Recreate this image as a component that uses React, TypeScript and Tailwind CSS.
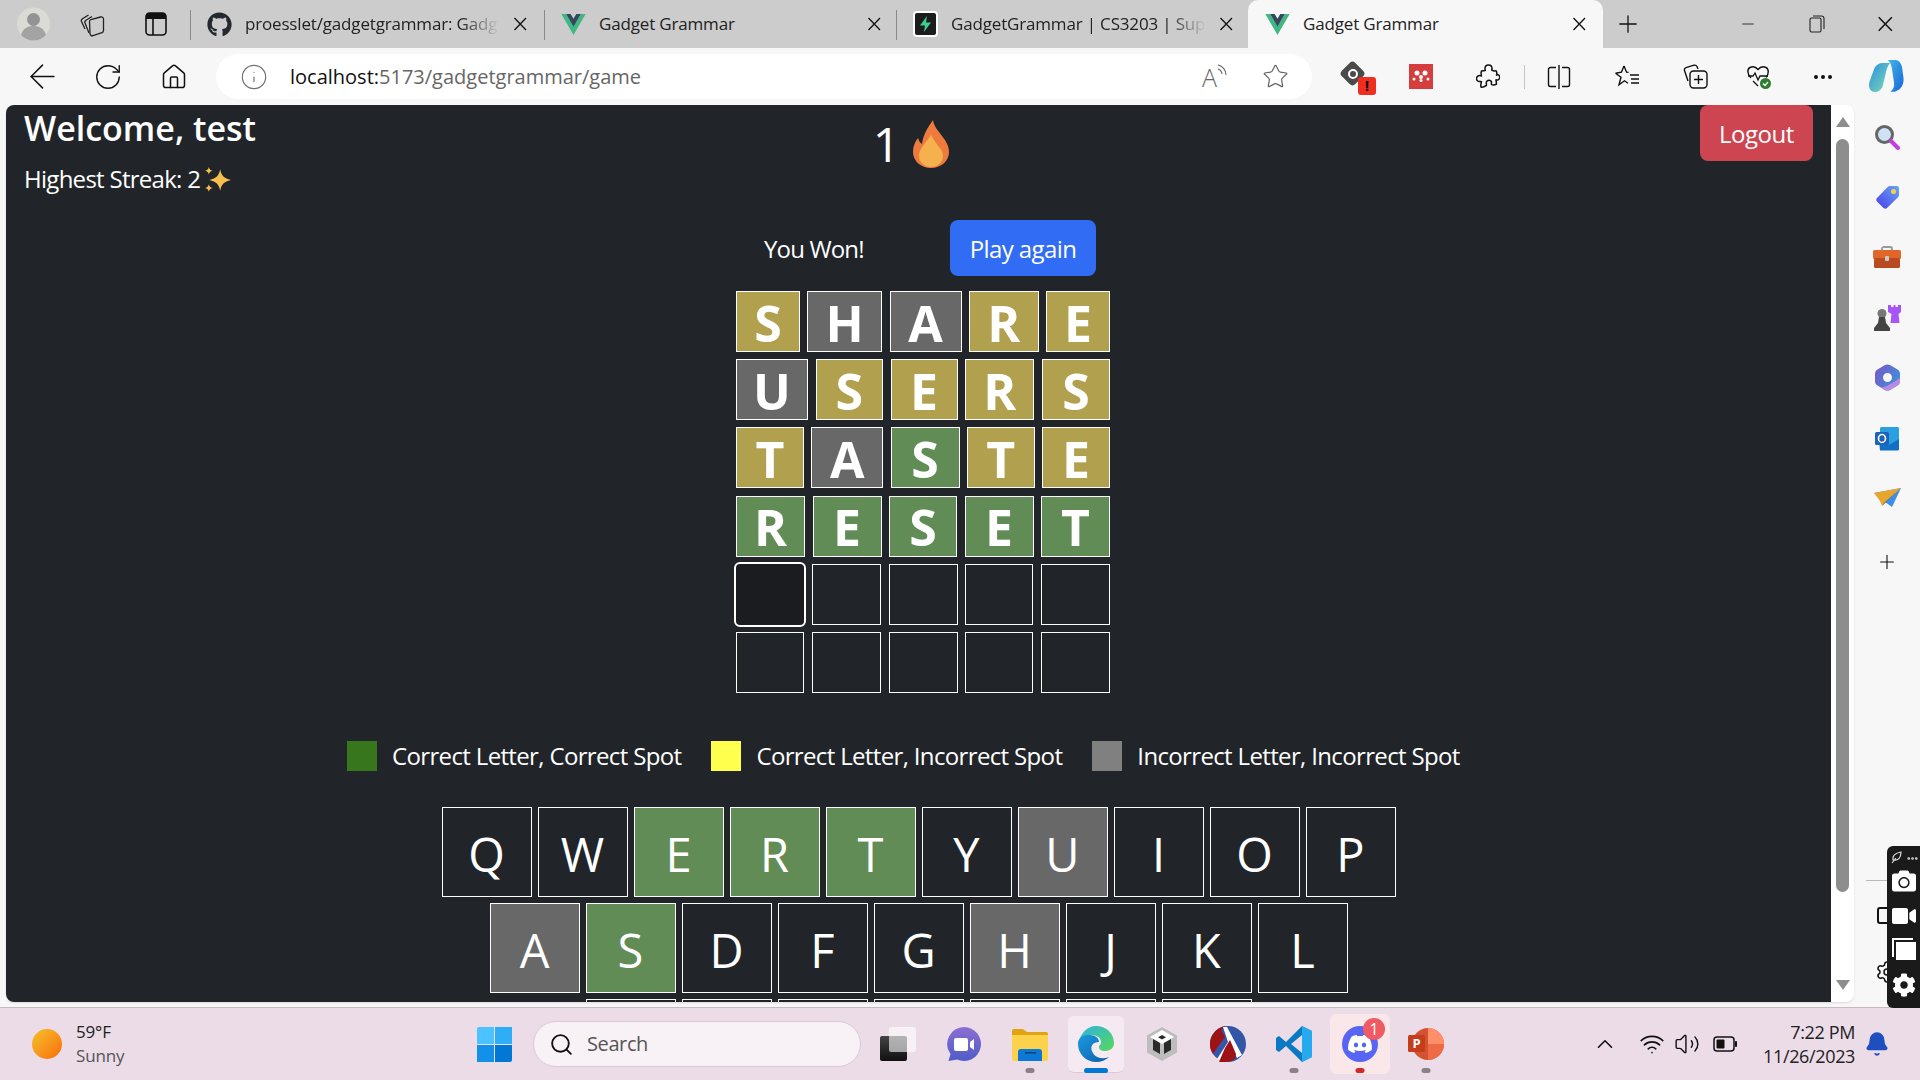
import { ArrowLeft, Ellipsis, House, Info, RotateCw, Search, Star, Plus, Minus, ChevronUp, Wifi, Volume2, Bell, Settings } from "lucide-react";
import { FaCamera, FaCog, FaDiscord, FaGithub, FaVideo } from "react-icons/fa";

const CloseIcon = ({ size = 14 }: { size?: number }) => (
  <svg width={size} height={size} viewBox="0 0 14 14" stroke="#111" strokeWidth="1.3" fill="none" className="shrink-0">
    <path d="M1.5 1 13 13M13 1 1.5 13" />
  </svg>
);

const VueLogo = () => (
  <svg width="25" height="21" viewBox="0 0 256 221" className="shrink-0">
    <path d="M0 0l128 220.8L256 0h-51.2L128 132.48 50.56 0H0z" fill="#41B883" />
    <path d="M50.56 0L128 133.12 204.8 0h-47.36L128 51.2 97.92 0H50.56z" fill="#35495E" />
  </svg>
);

const SupabaseLogo = () => (
  <svg width="25" height="26" viewBox="0 0 25 26" className="shrink-0">
    <rect x="1" y="1" width="23" height="24" rx="3" fill="#1c1c1c" stroke="#fff" strokeWidth="2" />
    <path d="M14 5 7 14.5h5L11 21l7-9.5h-5z" fill="#3ecf8e" />
  </svg>
);

interface ITabProps {
  title: string;
  icon: React.ReactNode;
  width: string;
  titleWidth: string;
  active?: boolean;
  fade?: boolean;
}

const Tab = (props: ITabProps) => {
  if (props.active) {
    return (
      <div className={`${props.width} h-[48px] bg-[#f7f7f7] rounded-t-[10px] flex items-center pl-[17px] text-[#222]`}>
        {props.icon}
        <div className={`${props.titleWidth} ml-[13px] text-[17px] tracking-[-0.01em] whitespace-nowrap overflow-hidden`}>{props.title}</div>
        <CloseIcon />
      </div>
    );
  }
  return (
    <div className={`${props.width} h-[48px] flex items-center pl-[17px] text-[#222] relative`}>
      <div className="absolute left-0 top-[10px] h-[30px] w-[1px] bg-[#8a8a8a]" />
      {props.icon}
      <div className={`${props.titleWidth} ml-[13px] text-[17px] tracking-[-0.01em] whitespace-nowrap overflow-hidden ${props.fade ? "[mask-image:linear-gradient(to_right,black_85%,transparent)]" : ""}`}>{props.title}</div>
      <CloseIcon />
    </div>
  );
};

const TabBar = () => (
  <div className="h-[48px] bg-[#cccccc] flex items-center">
    <div className="w-[67px] flex justify-center">
      <svg width="33" height="34" viewBox="0 0 33 34">
        <circle cx="16.5" cy="17" r="16.5" fill="#dbdbd6" />
        <circle cx="16.5" cy="12.5" r="6.5" fill="#939393" />
        <path d="M4 28c2-7 7-9 12.500-9s10.500 2 12.500 9c-3 3.500-7.500 5.500-12.500 5.500S7 31.500 4 28z" fill="#a3a3a3" />
      </svg>
    </div>
    <div className="w-[50px] flex justify-center">
      <svg width="25" height="25" viewBox="0 0 25 25" fill="none" stroke="#222" strokeWidth="1.3">
        <path d="M5 17 1.500 9.500c-.5-1.200 0-2.200 1-2.700L8.500 3" />
        <path d="M9 21 5 11c-.5-1.200 0-2.200 1-2.700L12 4.500" />
        <path d="M9.500 9.500c0-1 .6-1.700 1.500-2l9.500-2.500c1.500-.4 3 .5 3 2v11.500c0 1-.6 1.800-1.500 2.100l-9 3c-1.500.5-3-.5-3-2z" />
      </svg>
    </div>
    <div className="w-[73px] pl-[28px]">
      <svg width="22" height="24" viewBox="0 0 22 24">
        <rect x="1" y="1" width="20" height="22" rx="3.500" fill="none" stroke="#111" strokeWidth="1.6" />
        <path d="M1 4.500A3.500 3.500 0 0 1 4.500 1h13A3.500 3.500 0 0 1 21 4.500V7H1z" fill="#111" />
        <path d="M8 7v16" stroke="#111" strokeWidth="1.6" />
      </svg>
    </div>
    <Tab title="proesslet/gadgetgrammar: Gadget Grammar" width="w-[354px]" titleWidth="w-[254px] mr-[14px]" fade icon={<FaGithub size={25} color="#24292f" className="shrink-0" />} />
    <Tab title="Gadget Grammar" width="w-[352px]" titleWidth="w-[268px]" icon={<VueLogo />} />
    <Tab title="GadgetGrammar | CS3203 | Supabase" width="w-[352px]" titleWidth="w-[255px] mr-[13px]" fade icon={<SupabaseLogo />} />
    <Tab title="Gadget Grammar" width="w-[355px]" titleWidth="w-[269px]" active icon={<VueLogo />} />
    <div className="ml-[9px] w-[32px] flex justify-center"><Plus size={28} strokeWidth={1.1} color="#111" /></div>
    <div className="ml-[89px] w-[30px] flex justify-center"><Minus size={18} strokeWidth={1.2} color="#222" /></div>
    <div className="ml-[39px] w-[30px] flex justify-center">
      <svg width="16" height="18" viewBox="0 0 16 18" fill="none" stroke="#222" strokeWidth="1.1">
        <rect x="1" y="3" width="11" height="14" rx="1.500" />
        <path d="M4 1h8.500A2.500 2.500 0 0 1 15 3.500V14" />
      </svg>
    </div>
    <div className="ml-[38px] w-[30px] flex justify-center"><CloseIcon size={16} /></div>
  </div>
);

const ToolSlot = ({ width, children }: { width: string; children: React.ReactNode }) => (
  <div className={`${width} h-[57px] flex items-center justify-center shrink-0`}>{children}</div>
);

const ToolBar = () => (
  <div className="h-[57px] bg-[#f7f7f7] flex items-center pl-[9px]">
    <ToolSlot width="w-[66px]"><ArrowLeft size={39} strokeWidth={0.9} color="#111" /></ToolSlot>
    <ToolSlot width="w-[66px]"><RotateCw size={30} strokeWidth={1.1} color="#111" /></ToolSlot>
    <ToolSlot width="w-[66px]"><House size={28} strokeWidth={1.3} color="#111" /></ToolSlot>
    <div className="ml-[9px] w-[1096px] h-[45px] rounded-full bg-white flex items-center shrink-0">
      <div className="ml-[24px]"><Info size={28} strokeWidth={1} color="#707070" /></div>
      <div className="ml-[22px] text-[20px] text-[#666] w-[904px] whitespace-nowrap">
        <span className="text-[#111]">localhost:</span>5173/gadgetgrammar/game
      </div>
      <div className="w-[32px] flex items-end text-[#666] ml-[8px]">
        <span className="text-[25px] leading-none font-light">A</span>
        <svg width="10" height="18" viewBox="0 0 10 18" fill="none" stroke="#666" strokeWidth="1.100" className="mb-[8px]">
          <path d="M1 5a6 6 0 0 1 4 5M1 1a10 10 0 0 1 8 10" />
        </svg>
      </div>
      <div className="ml-[28px]"><Star size={27} strokeWidth={1.1} color="#666" /></div>
    </div>
    <div className="ml-[10px] flex items-center">
      <ToolSlot width="w-[66px]">
        <div className="relative w-[28px] h-[30px]">
          <div className="absolute left-[2px] top-[2px] w-[19px] h-[19px] bg-[#4a4a4a] rounded-[4px] rotate-45" />
          <div className="absolute left-[7px] top-[7px] w-[10px] h-[10px] border-2 border-white rounded-full" />
          <div className="absolute left-[17px] top-[15px] w-[18px] h-[18px] bg-[#ef2e1f] rounded-[3px] text-[14px] font-bold leading-[18px] text-center text-black">!</div>
        </div>
      </ToolSlot>
      <ToolSlot width="w-[66px]">
        <svg width="24" height="25" viewBox="0 0 24 25">
          <rect width="24" height="25" fill="#d63d3d" />
          <g fill="#fff">
            <circle cx="8" cy="9" r="2.500" /><circle cx="16" cy="9" r="2.500" /><circle cx="12" cy="13" r="2" /><circle cx="5" cy="15" r="1.500" /><circle cx="12" cy="16.500" r="1.500" /><circle cx="19" cy="15" r="1.500" />
          </g>
        </svg>
      </ToolSlot>
      <ToolSlot width="w-[67px]">
        <svg width="24" height="25" viewBox="0 0 24 25" fill="none" stroke="#111" strokeWidth="1.500" strokeLinejoin="round">
          <path d="M9 4.500C9 2.500 10.500 1 12.500 1S16 2.500 16 4.500c0 .7-.2 1.200-.3 1.700.9.500 3.300 1 4.300.5.800 1 .8 3.300.5 4.300.5-.3 1-.3 1.500-.2 1.500.3 2 2 1.500 3.500-.4 1.500-2 2.200-3.500 1.500l.5 4.300c-1.500.8-3.500 1-5 .5-.2-.8-.2-1.300 0-2 .2-1-1-2.300-2.500-2.300S10 17.500 10.300 19c.2.800.2 1.500 0 2.500-1.600 1-3.800 2-5.300 1.500-.5-2 0-4 .5-5.300-.5-.3-1-.2-1.700-.1-1.800.1-3.300-1.300-3.300-3s1.500-3.100 3.300-3c.7 0 1.200.2 1.700.4-.5-1.500-.5-3.500 0-5 1-.3 3-.5 3.800-.5-.2-.5-.3-1-.3-1.500z" />
        </svg>
      </ToolSlot>
      <div className="ml-[3px] w-[1px] h-[24px] bg-[#c4c4c4] shrink-0" />
      <ToolSlot width="w-[68px]">
        <svg width="24" height="26" viewBox="0 0 24 26" fill="none" stroke="#111" strokeWidth="1.400">
          <path d="M9 3.500H3.500A2 2 0 0 0 1.500 5.500v15a2 2 0 0 0 2 2H9M15 3.500h5.500a2 2 0 0 1 2 2v15a2 2 0 0 1-2 2H15M12 1v24" />
        </svg>
      </ToolSlot>
      <ToolSlot width="w-[68px]">
        <svg width="26" height="25" viewBox="0 0 26 25" fill="none" stroke="#111" strokeWidth="1.400">
          <path d="M10 2l2.600 6.200 2 .2M1.500 9.300l5.500 4-2 7.500 5.500-4 3.500 2.500M10 2 7.400 8.200 1.500 9.300" />
          <path d="M16 11h9M17 15h8M17 19h8" />
        </svg>
      </ToolSlot>
      <ToolSlot width="w-[68px]">
        <svg width="25" height="25" viewBox="0 0 25 25" fill="none" stroke="#111" strokeWidth="1.400">
          <path d="M5 17 1.500 6.500c-.4-1.500.3-2.500 1.500-2.900L11 1.200c1.200-.3 2.400.2 3 1.300l1 2.500" />
          <rect x="7" y="7" width="17" height="17" rx="3.500" />
          <path d="M15.500 11v9M11 15.500h9" />
        </svg>
      </ToolSlot>
      <ToolSlot width="w-[60px]">
        <svg width="26" height="26" viewBox="0 0 26 26">
          <path d="M5 14C1 10 1 5 4 3.500c3-1.500 6-.5 8 2 2-2.500 5-3.500 8-2 3 1.500 3 6.500 0 10" fill="none" stroke="#111" strokeWidth="1.400" />
          <path d="M2 12h5l2-3 3 7 2-4h8M7 17l5 5" fill="none" stroke="#111" strokeWidth="1.300" />
          <circle cx="19.500" cy="19.500" r="5.500" fill="#2e7d32" />
          <path d="M17 19.500l2 2 3-3.500" fill="none" stroke="#fff" strokeWidth="1.200" />
        </svg>
      </ToolSlot>
      <ToolSlot width="w-[68px]"><Ellipsis size={24} strokeWidth={2} color="#111" /></ToolSlot>
      <ToolSlot width="w-[58px]">
        <svg width="36" height="36" viewBox="0 0 36 36">
          <defs>
            <linearGradient id="cpA" x1="0" y1="0" x2="1" y2="1"><stop offset="0" stopColor="#3fb8e8" /><stop offset="1" stopColor="#1a63d8" /></linearGradient>
            <linearGradient id="cpB" x1="0" y1="0" x2="1" y2="1"><stop offset="0" stopColor="#2b8fe0" /><stop offset="1" stopColor="#7fdcb0" /></linearGradient>
          </defs>
          <path d="M20 1h7c4 0 6 3 7 7l1.500 11c.5 6-2 11-7 13-2 1-4 1-6 .5 3-2 4-5 3.500-9L24 10c-.5-4-2-7-4-9z" fill="url(#cpA)" />
          <path d="M15 4h7c-2 2-3 5-4 9l-3 13c-1 4-4 7-8 7-4 0-6-3-6-7 0-2 .5-4 1.500-6l4-11C8 6 11 4 15 4z" fill="url(#cpB)" />
        </svg>
      </ToolSlot>
    </div>
  </div>
);

// tile widths vary in the screenshot because each row is stretched by its letters
const GRID = [
  [
    { l: "S", c: "bg-[#b1a04e] w-[64px]" },
    { l: "H", c: "bg-[#686868] w-[75px]" },
    { l: "A", c: "bg-[#686868] w-[72px]" },
    { l: "R", c: "bg-[#b1a04e] w-[70px]" },
    { l: "E", c: "bg-[#b1a04e] w-[64px]" },
  ],
  [
    { l: "U", c: "bg-[#686868] w-[72px]" },
    { l: "S", c: "bg-[#b1a04e] w-[67px]" },
    { l: "E", c: "bg-[#b1a04e] w-[67px]" },
    { l: "R", c: "bg-[#b1a04e] w-[69px]" },
    { l: "S", c: "bg-[#b1a04e] w-[68px]" },
  ],
  [
    { l: "T", c: "bg-[#b1a04e] w-[68px]" },
    { l: "A", c: "bg-[#686868] w-[72px]" },
    { l: "S", c: "bg-[#618c56] w-[69px]" },
    { l: "T", c: "bg-[#b1a04e] w-[68px]" },
    { l: "E", c: "bg-[#b1a04e] w-[68px]" },
  ],
  [
    { l: "R", c: "bg-[#618c56] w-[69px]" },
    { l: "E", c: "bg-[#618c56] w-[69px]" },
    { l: "S", c: "bg-[#618c56] w-[68px]" },
    { l: "E", c: "bg-[#618c56] w-[69px]" },
    { l: "T", c: "bg-[#618c56] w-[69px]" },
  ],
  [
    { l: "", c: "w-[68px] bg-[#1a1c1f] border-0 rounded-[4px] outline-2 outline-white" },
    { l: "", c: "w-[69px]" },
    { l: "", c: "w-[69px]" },
    { l: "", c: "w-[68px]" },
    { l: "", c: "w-[69px]" },
  ],
  [
    { l: "", c: "w-[68px]" },
    { l: "", c: "w-[69px]" },
    { l: "", c: "w-[69px]" },
    { l: "", c: "w-[68px]" },
    { l: "", c: "w-[69px]" },
  ],
];

const KEYS = [
  ["Q", "W", "E", "R", "T", "Y", "U", "I", "O", "P"],
  ["A", "S", "D", "F", "G", "H", "J", "K", "L"],
  ["Z", "X", "C", "V", "B", "N", "M"],
];
const GREEN_KEYS = ["E", "R", "T", "S"];
const GREY_KEYS = ["U", "A", "H"];

const Key = ({ letter }: { letter: string }) => {
  let bg = "";
  if (GREEN_KEYS.includes(letter)) bg = "bg-[#618c56]";
  if (GREY_KEYS.includes(letter)) bg = "bg-[#686868]";
  return (
    <div className={`w-[90px] h-[90px] border border-white flex items-center justify-center pt-[4px] text-[47px] text-white shrink-0 ${bg}`}>
      {letter}
    </div>
  );
};

const Flame = () => (
  <svg width="36" height="48" viewBox="0 0 36 48">
    <path d="M20 0c1 7 5 10 9 16 4 5 7 10 7 16 0 9-8 16-18 16S0 41 0 32c0-6 2-10 5-14 1 3 2 5 4 6 1-9 6-17 11-24z" fill="#ef7a3e" />
    <path d="M18 15c3 5 5 8 8 12 3 3 4 6 4 9 0 6-5 11-12 11S6 42 6 36c0-8 8-14 12-21z" fill="#f4b14e" />
  </svg>
);

const Sparkles = () => (
  <svg width="28" height="28" viewBox="0 0 26 26" className="inline-block align-[-6px] ml-[4px]" fill="#f5bf4f">
    <path d="M15 3c1.200 6 3.500 8.500 10 10-6.500 1.500-8.800 4-10 10-1.200-6-3.500-8.500-10-10 6.500-1.500 8.800-4 10-10z" />
    <path d="M4.500 1c.5 2.200 1.300 3 3.500 3.500-2.200.5-3 1.300-3.500 3.500C4 5.800 3.200 5 1 4.500 3.200 4 4 3.200 4.500 1z" />
    <path d="M4.500 17c.5 2.200 1.300 3 3.500 3.500-2.200.5-3 1.300-3.500 3.500-.5-2.200-1.300-3-3.500-3.500 2.200-.5 3-1.300 3.500-3.500z" />
  </svg>
);

const LegendItem = ({ color, label }: { color: string; label: string }) => (
  <div className="flex items-center gap-[15px] h-[30px]">
    <div className={`w-[30px] h-[30px] ${color}`} />
    <div className="pt-[1px] text-[24px] leading-[30px] tracking-[-0.027em] text-white whitespace-nowrap">{label}</div>
  </div>
);

const Game = () => (
  <div className="w-[1825px] h-[897px] bg-[#212529] overflow-hidden rounded-l-[8px] text-white shrink-0">
    <div className="grid grid-cols-3 h-[115px] px-[18px]">
      <div>
        <div className="text-[34px] leading-[46px] font-semibold">Welcome, test</div>
        <div className="mt-[13px] text-[24px] leading-[30px] tracking-[-0.03em]">Highest Streak: 2<Sparkles /></div>
      </div>
      <div className="flex justify-center pr-[15px]">
        <div className="flex items-start">
          <span className="mt-[3px] text-[48px] leading-[72px]">1</span>
          <div className="ml-[13px] mt-[15px]"><Flame /></div>
        </div>
      </div>
      <div className="flex justify-end">
        <button className="w-[113px] h-[56px] pt-[1px] bg-[#cd4550] rounded-[8px] text-[24px] tracking-[-0.02em]">Logout</button>
      </div>
    </div>

    <div className="ml-[758px] flex items-center h-[56px]">
      <div className="w-[186px] pt-[1px] text-[24px] tracking-[-0.035em]">You Won!</div>
      <button className="w-[146px] h-[56px] pt-[1px] bg-[#316cf4] rounded-[8px] text-[24px] tracking-[-0.025em]">Play again</button>
    </div>

    <div className="ml-[730px] mt-[15px] w-[374px] flex flex-col gap-[7.2px]">
      {GRID.map((row, i) => (
        <div key={i} className="flex justify-between">
          {row.map((cell, j) => (
            <div key={j} className={`h-[61px] border border-white flex items-center justify-center pt-[3px] text-[50px] font-bold text-white ${cell.c}`}>
              {cell.l}
            </div>
          ))}
        </div>
      ))}
    </div>

    <div className="ml-[341px] mt-[48px] flex gap-[30px]">
      <LegendItem color="bg-[#38761d]" label="Correct Letter, Correct Spot" />
      <LegendItem color="bg-[#ffff4d]" label="Correct Letter, Incorrect Spot" />
      <LegendItem color="bg-[#808080]" label="Incorrect Letter, Incorrect Spot" />
    </div>

    <div className="mt-[36px] flex flex-col gap-[6px]">
      {KEYS.map((row, i) => (
        <div key={i} className="flex justify-center gap-[6px]">
          {row.map((letter) => <Key key={letter} letter={letter} />)}
        </div>
      ))}
    </div>
  </div>
);

const Scrollbar = () => (
  <div className="w-[23px] h-[897px] flex flex-col items-center pt-[12px] shrink-0">
    <div className="w-0 h-0 border-x-[7px] border-x-transparent border-b-[10px] border-b-[#8d8d8d]" />
    <div className="mt-[12px] w-[13px] h-[753px] rounded-full bg-[#8d8d8d]" />
    <div className="mt-[88px] w-0 h-0 border-x-[7px] border-x-transparent border-t-[10px] border-t-[#8d8d8d]" />
  </div>
);

const Side = ({ children }: { children: React.ReactNode }) => (
  <div className="h-[60.2px] w-full flex items-center justify-center">{children}</div>
);

const SideBar = () => (
  <div className="w-[66px] h-full flex flex-col items-center pt-[2px] shrink-0">
    <Side>
      <svg width="26" height="26" viewBox="0 0 26 26">
        <circle cx="10.500" cy="10.500" r="8" fill="#cfe2f5" stroke="#666" strokeWidth="3" />
        <path d="M17 17l7 7" stroke="#c33de0" strokeWidth="4" strokeLinecap="round" />
      </svg>
    </Side>
    <Side>
      <svg width="25" height="25" viewBox="0 0 25 25">
        <defs><linearGradient id="tag" x1="0" y1="1" x2="1" y2="0"><stop offset="0" stopColor="#4a3fe8" /><stop offset="1" stopColor="#69a5f5" /></linearGradient></defs>
        <path d="M15 1h7a2 2 0 0 1 2 2v7c0 1-.4 1.700-1 2.300L12 23c-1 1-2.500 1-3.500 0L2 16.500c-1-1-1-2.500 0-3.500L12.700 2c.6-.6 1.300-1 2.300-1z" fill="url(#tag)" />
        <circle cx="18.500" cy="6.500" r="2.500" fill="#f4d24a" />
      </svg>
    </Side>
    <Side>
      <svg width="28" height="22" viewBox="0 0 28 22">
        <path d="M9 5V2.500C9 1.500 10 1 11 1h6c1 0 2 .5 2 1.500V5" fill="none" stroke="#999" strokeWidth="1.800" />
        <rect y="4" width="28" height="9" rx="1.500" fill="#e0662a" />
        <rect x="1" y="12" width="26" height="10" rx="1.500" fill="#b84b20" />
        <rect x="12" y="10" width="4" height="5" rx="1" fill="#c9c9c9" />
      </svg>
    </Side>
    <Side>
      <svg width="28" height="28" viewBox="0 0 28 28">
        <path d="M15 1h3v2h2.500V1h2v2H25V1h3v7l-2.500 2 1 9h-9l1-9-3.500-2z" fill="#a855f7" />
        <circle cx="9" cy="9.500" r="4.500" fill="#777" />
        <path d="M6 13h6l1 6 4 5v3H1v-3l4-5z" fill="#444" />
      </svg>
    </Side>
    <Side>
      <svg width="25" height="27" viewBox="0 0 25 27">
        <defs>
          <linearGradient id="m365a" x1="0" y1="0" x2="1" y2="0.600"><stop offset="0" stopColor="#7a55c8" /><stop offset="1" stopColor="#3f8fd8" /></linearGradient>
        </defs>
        <path fillRule="evenodd" d="M10 1c1.500-.8 3.500-.8 5 0l7.500 4.500C24 6.400 25 8 25 10v7c0 2-1 3.600-2.500 4.500L15 26c-1.500.8-3.500.8-5 0l-7.500-4.500C1 20.600 0 19 0 17v-7c0-2 1-3.600 2.500-4.500zM12.500 9a4.500 4.500 0 1 0 0 9 4.500 4.500 0 0 0 0-9z" fill="url(#m365a)" />
        <path d="M24 13.500c.6.800 1 2 1 3.500 0 2-1 3.600-2.500 4.500L15 26c-1.500.8-3.500.8-5 0l-5-3c3 .5 6-.2 8.500-2l7-4c1.800-1 3-2 3.500-3.500z" fill="#b98ae2" />
      </svg>
    </Side>
    <Side>
      <svg width="25" height="25" viewBox="0 0 25 25">
        <rect x="5" y="1" width="19" height="23" rx="1.500" fill="#2aa0e0" />
        <path d="M4 15l10 4 10-6v10a1.500 1.500 0 0 1-1.500 1.500H5z" fill="#1270c4" />
        <rect y="6" width="14" height="13" rx="1.500" fill="#1c63b8" />
        <ellipse cx="7" cy="12.500" rx="3.500" ry="4" fill="none" stroke="#fff" strokeWidth="1.600" />
      </svg>
    </Side>
    <Side>
      <svg width="27" height="20" viewBox="0 0 27 20">
        <path d="M0 5 27 0 18 19 11 14z" fill="#3c8ee8" />
        <path d="M0 5 6 13 8 18 27 0z" fill="#e8a62c" />
        <path d="M8 18l3-4 16-14z" fill="#2a6cc4" />
      </svg>
    </Side>
    <div className="mt-[4px] h-[60px] flex items-center"><Plus size={22} strokeWidth={1.2} color="#111" /></div>
    <div className="mt-[288px] ml-[12px] w-[54px] h-[1px] bg-[#bbb] shrink-0" />
    <div className="mt-[26px] w-full pl-[23px]">
      <div className="w-[20px] h-[17px] border-2 border-[#111] rounded-[3px]" />
    </div>
    <div className="mt-[36px] w-full pl-[21px]">
      <Settings size={24} strokeWidth={1.5} color="#111" />
    </div>
  </div>
);

// capture tool that sits over the browser window
const FloatingTools = () => (
  <div className="absolute right-0 top-[846px] w-[33px] h-[162px] bg-[#1a1a1a] rounded-l-[6px] flex flex-col items-center text-white">
    <div className="h-[22px] w-full flex items-center pl-[3px] gap-[3px] mt-[1px]">
      <svg width="13" height="14" viewBox="0 0 13 14" fill="none" stroke="#ddd" strokeWidth="1.200"><path d="M2 12 6 7M3 9c-1-4 2-7 8-8 0 6-3 9-8 8z" /></svg>
      <Ellipsis size={13} strokeWidth={3} color="#ddd" />
    </div>
    <div className="h-[24px] flex items-center"><FaCamera size={24} color="#fff" /></div>
    <div className="mt-[5px] h-[36px] flex items-center"><FaVideo size={24} color="#fff" /></div>
    <div className="relative h-[30px] w-[24px]">
      <div className="absolute left-0 top-[4px] w-[21px] h-[19px] border-t-2 border-l-2 border-white" />
      <div className="absolute left-[4px] top-[8px] w-[20px] h-[18px] bg-white" />
    </div>
    <div className="h-[42px] flex items-center"><FaCog size={24} color="#fff" /></div>
  </div>
);

const TaskSlot = ({ children, dot, bg }: { children: React.ReactNode; dot?: string; bg?: string }) => (
  <div className="w-[66px] h-[72px] relative flex items-center justify-center shrink-0">
    {bg && <div className={`absolute rounded-[6px] ${bg}`} />}
    <div className="relative flex items-center justify-center">{children}</div>
    {dot && <div className={`absolute bottom-[7px] left-1/2 -translate-x-1/2 h-[5px] rounded-full ${dot}`} />}
  </div>
);

const TaskBar = () => (
  <div className="h-[72px] bg-[#ecdce8] flex items-center text-[#222]">
    <div className="w-[477px] flex items-center pl-[32px] shrink-0">
      <div className="w-[30px] h-[30px] rounded-full bg-gradient-to-br from-[#f3c02c] to-[#f76c05]" />
      <div className="ml-[14px]">
        <div className="text-[17px] leading-[24px] tracking-[-0.01em]">59°F</div>
        <div className="text-[17px] leading-[24px] tracking-[-0.01em] text-[#555]">Sunny</div>
      </div>
    </div>
    <div className="w-[35px] h-[35px] grid grid-cols-2 gap-[1px] shrink-0">
      <div className="bg-[#4cc2ff] rounded-tl-[2px]" />
      <div className="bg-[#30aef5]" />
      <div className="bg-[#1391ea]" />
      <div className="bg-[#0078d4] rounded-br-[2px]" />
    </div>
    <div className="ml-[21px] w-[328px] h-[46px] rounded-full bg-[#f8f2f6] border border-[#dcc9d5] flex items-center pl-[15px] shrink-0">
      <Search size={25} strokeWidth={1.8} color="#111" />
      <span className="ml-[13px] text-[20px] tracking-[-0.02em] text-[#555]">Search</span>
    </div>
    <div className="ml-[4px] flex">
      <TaskSlot>
        <div className="relative w-[36px] h-[34px]">
          <div className="absolute left-0 bottom-0 w-[27px] h-[25px] rounded-[2px] bg-gradient-to-b from-[#444] to-[#111]" />
          <div className="absolute right-0 top-0 w-[27px] h-[25px] rounded-[2px] bg-white/60" />
        </div>
      </TaskSlot>
      <TaskSlot>
        <svg width="34" height="34" viewBox="0 0 34 34">
          <defs><linearGradient id="meet" x1="0" y1="0" x2="0" y2="1"><stop offset="0" stopColor="#8c6fd0" /><stop offset="1" stopColor="#4f5cc9" /></linearGradient></defs>
          <path d="M17 0a17 17 0 1 1-7 32.500L1.500 34l2-7A17 17 0 0 1 17 0z" fill="url(#meet)" />
          <rect x="7" y="11" width="14" height="13" rx="2" fill="#fff" />
          <path d="M23 15l4-3v11l-4-3z" fill="#fff" />
        </svg>
      </TaskSlot>
      <TaskSlot dot="w-[9px] bg-[#8c7f88]">
        <svg width="36" height="33" viewBox="0 0 36 33">
          <path d="M0 3a2 2 0 0 1 2-2h9l4 3h19a2 2 0 0 1 2 2v6H0z" fill="#e0a312" />
          <path d="M0 7h36v24a2 2 0 0 1-2 2H2a2 2 0 0 1-2-2z" fill="#fcd14b" />
          <path d="M6 33V24a3 3 0 0 1 3-3h18a3 3 0 0 1 3 3v9z" fill="#0a78d4" />
          <rect x="13" y="24" width="11" height="1.500" fill="#06406f" />
        </svg>
      </TaskSlot>
      <TaskSlot bg="left-[5px] top-[8px] w-[56px] h-[57px] bg-[#f6eaf2] border-b border-[#dcc9d5]" dot="w-[24px] bg-[#0078d4]">
        <svg width="36" height="36" viewBox="0 0 36 36">
          <defs>
            <linearGradient id="edgeA" x1="0" y1="0" x2="1" y2="1"><stop offset="0" stopColor="#2bb3e0" /><stop offset="1" stopColor="#59d85c" /></linearGradient>
            <linearGradient id="edgeB" x1="0" y1="0" x2="1" y2="1"><stop offset="0" stopColor="#1c9be0" /><stop offset="1" stopColor="#0c5ea8" /></linearGradient>
          </defs>
          <path d="M18 0c10 0 18 7 18 17 0 5-4 8-9 8-3 0-6-1-6-4 0-2 2-2 2-5 0-4-4-7-9-7-6 0-11 4-14 9C2 8 9 0 18 0z" fill="url(#edgeA)" />
          <path d="M0 18c0-6 6-10 12-9 5 0 9 3 9 7-6 0-9 4-7 9 2 6 9 9 17 6-3 3-8 5-13 5C8 36 0 28 0 18z" fill="url(#edgeB)" />
        </svg>
      </TaskSlot>
      <TaskSlot>
        <svg width="30" height="34" viewBox="0 0 30 34">
          <path d="M15 0l15 8.500v17L15 34 0 25.500v-17z" fill="#bdbdbd" />
          <path d="M15 3l12 7-12 7-12-7z" fill="#fff" />
          <path d="M6 12l7 4v11l-7-4zM24 12l-7 4v11l7-4z" fill="#2a2a2a" />
          <path d="M15 8l4 2.300-4 2.300-4-2.300z" fill="#2a2a2a" />
        </svg>
      </TaskSlot>
      <TaskSlot>
        <svg width="36" height="36" viewBox="0 0 36 36">
          <circle cx="18" cy="18" r="18" fill="#3356a6" />
          <path d="M18 0a18 18 0 0 0-15 28C7 22 12 15 15 11L11 4c2-2 4-4 7-4z" fill="#9e1216" />
          <path d="M13 1l4 0 15 28-5 3-6-13-9 16-5-2 11-17z" fill="#fff" />
          <path d="M15 22l5-8 6 14-1 5c-3 2-6 3-10 3h-6z" fill="#9e1216" />
        </svg>
      </TaskSlot>
      <TaskSlot dot="w-[9px] bg-[#8c7f88]">
        <svg width="36" height="36" viewBox="0 0 36 36">
          <path d="M26 0l10 5v26l-10 5L10 20 3 26l-3-2V12l3-2 7 6z" fill="#0a78c2" />
          <path d="M26 0l10 5v26l-10 5z" fill="#25a9ef" />
          <path d="M26 9 15 18l11 9z" fill="#ecdce8" />
        </svg>
      </TaskSlot>
      <TaskSlot bg="left-[3px] top-[6px] w-[60px] h-[60px] bg-[#f9e7ea]" dot="w-[9px] bg-[#d22a2a]">
        <div className="relative w-[36px] h-[36px] rounded-full bg-[#5865f2] flex items-center justify-center">
          <FaDiscord size={26} color="#fff" />
          <div className="absolute -right-[7px] -top-[8px] w-[22px] h-[22px] rounded-full bg-[#ef5a63] text-white text-[16px] leading-[22px] text-center">1</div>
        </div>
      </TaskSlot>
      <TaskSlot dot="w-[9px] bg-[#8c7f88]">
        <svg width="36" height="36" viewBox="0 0 36 36">
          <circle cx="20" cy="18" r="16" fill="#d35230" />
          <path d="M20 2a16 16 0 0 1 16 16H20z" fill="#ff8f6b" />
          <path d="M20 18h16a16 16 0 0 1-16 16z" fill="#ed6c47" />
          <rect y="9" width="17" height="17" rx="1.500" fill="#c43e1c" />
          <text x="8.500" y="22" textAnchor="middle" fontSize="13" fontWeight="700" fill="#fff">P</text>
        </svg>
      </TaskSlot>
    </div>
    <div className="ml-[131px] w-[30px] flex justify-center"><ChevronUp size={26} strokeWidth={1.5} color="#111" /></div>
    <div className="ml-[15px] w-[34px] flex justify-center"><Wifi size={26} strokeWidth={1.5} color="#111" /></div>
    <div className="ml-[1px] w-[34px] flex justify-center"><Volume2 size={26} strokeWidth={1.3} color="#111" /></div>
    <div className="ml-[4px] w-[34px] flex justify-center">
      <svg width="24" height="16" viewBox="0 0 24 16">
        <rect x="1" y="1" width="20" height="14" rx="3" fill="none" stroke="#111" strokeWidth="1.500" />
        <rect x="3.500" y="3.500" width="8" height="9" rx="1" fill="#111" />
        <rect x="22" y="5" width="2" height="6" rx="1" fill="#111" />
      </svg>
    </div>
    <div className="w-[113px] text-right text-[18px] leading-[24px] tracking-[-0.02em] whitespace-nowrap">
      <div>7:22 PM</div>
      <div>11/26/2023</div>
    </div>
    <div className="ml-[6px] w-[32px] flex justify-center"><Bell size={26} strokeWidth={1.5} fill="#1f4fbf" color="#1f4fbf" /></div>
  </div>
);

export default function App() {
  return (
    <div className="w-[1920px] h-[1080px] overflow-hidden relative bg-[#f7f7f7] font-['Open_Sans',sans-serif]">
      <TabBar />
      <ToolBar />
      <div className="h-[903px] flex border-b border-[#c8b8c3]">
        <div className="ml-[6px] w-[1848px] h-[897px] bg-white rounded-[8px] flex shrink-0 shadow-[0_1px_2px_rgba(0,0,0,0.12)]">
          <Game />
          <Scrollbar />
        </div>
        <SideBar />
      </div>
      <TaskBar />
      <FloatingTools />
    </div>
  );
}
